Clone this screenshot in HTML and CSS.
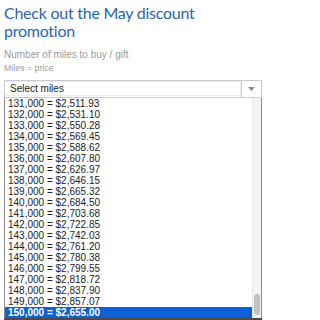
FILE: index.html
```html
<!DOCTYPE html>
<html>
<head>
<meta charset="utf-8">
<link rel="stylesheet" href="styles.css">
</head>
<body>
<div class="page">
  <h1 class="title">Check out the May discount promotion</h1>
  <p class="label">Number of miles to buy / gift</p>
  <p class="hint">Miles = price</p>
  <div class="select">
    <span class="select-text">Select miles</span>
    <span class="select-btn"><svg width="7" height="4" viewBox="0 0 7 4"><path d="M0 0H7L3.5 4Z" fill="#8a8a8a"/></svg></span>
  </div>
  <div class="list">
    <ul class="options">
      <li>131,000 = $2,511.93</li>
      <li>132,000 = $2,531.10</li>
      <li>133,000 = $2,550.28</li>
      <li>134,000 = $2,569.45</li>
      <li>135,000 = $2,588.62</li>
      <li>136,000 = $2,607.80</li>
      <li>137,000 = $2,626.97</li>
      <li>138,000 = $2,646.15</li>
      <li>139,000 = $2,665.32</li>
      <li>140,000 = $2,684.50</li>
      <li>141,000 = $2,703.68</li>
      <li>142,000 = $2,722.85</li>
      <li>143,000 = $2,742.03</li>
      <li>144,000 = $2,761.20</li>
      <li>145,000 = $2,780.38</li>
      <li>146,000 = $2,799.55</li>
      <li>147,000 = $2,818.72</li>
      <li>148,000 = $2,837.90</li>
      <li>149,000 = $2,857.07</li>
      <li class="selected">150,000 = $2,655.00</li>
    </ul>
    <div class="scrollbar"><div class="thumb"></div></div>
  </div>
  <div class="below"></div>
</div>
</body>
</html>
```

FILE: styles.css
```css
html, body {
  margin: 0;
  padding: 0;
  background: #ffffff;
}
body {
  width: 265px;
  height: 320px;
  overflow: hidden;
}
.page {
  display: flex;
  flex-direction: column;
  padding: 0 3px 0 4px;
}
.title {
  margin: 4px 0 0 0;
  font-family: "Lato", "Open Sans", sans-serif;
  font-weight: 400;
  font-size: 16px;
  letter-spacing: -0.25px;
  line-height: 18px;
  color: #2a64ae;
}
.label {
  margin: 9px 0 0 0;
  font-family: "Liberation Sans", Arial, sans-serif;
  font-size: 10px;
  line-height: 12px;
  color: #9a9a9a;
}
.hint {
  margin: 2px 0 0 0;
  font-family: "Liberation Sans", Arial, sans-serif;
  font-size: 8.8px;
  line-height: 11px;
  color: #9a9a9a;
}
.select {
  margin-top: 6px;
  height: 16px;
  border: 1px solid #c9c9c9;
  display: flex;
  background: #fff;
}
.select-text {
  flex: 1;
  margin: 0 0 1px 0;
  border: 1px solid #ececec;
  border-left: none;
  padding-left: 5px;
  font-family: "Liberation Sans", Arial, sans-serif;
  font-size: 10px;
  line-height: 14px;
  color: #222;
}
.select-btn {
  width: 19px;
  border-left: 1px solid #d0d0d0;
  display: flex;
  align-items: center;
  justify-content: center;
}
.list {
  display: flex;
  height: 220px;
  border-left: 1px solid #8c8c8c;
  border-right: 1px solid #8c8c8c;
  background: #fff;
}
.options {
  flex: 1;
  list-style: none;
  margin: 0;
  padding: 0;
  display: flex;
  flex-direction: column;
}
.options li {
  height: 11px;
  padding-left: 3px;
  font-family: "Liberation Sans", Arial, sans-serif;
  font-size: 10px;
  line-height: 11px;
  color: #222;
}
.options li.selected {
  background: #0d60d6;
  color: #fff;
  font-weight: 700;
}
.scrollbar {
  width: 8px;
  border-left: 1px solid #e6e6e6;
  background: #f5f5f5;
  display: flex;
  flex-direction: column;
  justify-content: flex-end;
  align-items: center;
  padding-bottom: 3px;
}
.thumb {
  width: 6px;
  height: 21px;
  border-radius: 3px;
  background: #c2c2c2;
}
.below {
  height: 2px;
  background: #4a4a4a;
}
```
